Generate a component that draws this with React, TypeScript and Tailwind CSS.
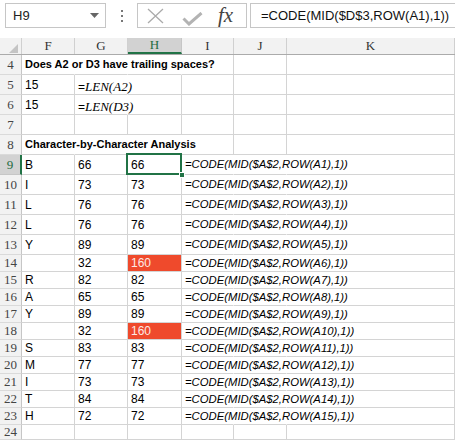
import React from "react";

type Cell = {
  t?: React.ReactNode;
  cls?: string;
  hideR?: boolean;
  red?: boolean;
  sel?: boolean;
};

const colW = ["w-[53px]", "w-[53px]", "w-[54px]", "w-[52px]", "w-[53px]"];

function Row({
  n,
  h,
  cells,
  selRow,
}: {
  n: number;
  h: string;
  cells: Cell[];
  selRow?: boolean;
}) {
  const all: Cell[] = [...cells];
  while (all.length < 6) all.push({});
  return (
    <div className={`flex ${h}`}>
      <div
        className={
          selRow
            ? "w-[22px] shrink-0 flex items-center justify-center bg-[#d2d2d2] border-b border-b-[#c6c6c6] border-r-2 border-r-[#217346] text-[#1e6b41] font-['Liberation_Serif',serif] text-[13px]"
            : "w-[22px] shrink-0 flex items-center justify-center bg-[#f2f2f2] border-b border-b-[#dadada] border-r border-r-[#c6c6c6] text-[#444] font-['Liberation_Serif',serif] text-[13px]"
        }
      >
        {n}
      </div>
      {all.map((c, i) => {
        const w = i < 5 ? colW[i] : "flex-1";
        const base = `${w} shrink-0 relative flex items-center pl-[3px] whitespace-nowrap border-b border-b-[#d4d4d4] border-r`;
        const rc = c.hideR ? "border-r-transparent" : "border-r-[#d4d4d4]";
        const bg = c.red ? "bg-[#ef4a2c] text-[#fde9e5]" : "text-black";
        return (
          <div key={i} className={`${base} ${rc} ${bg}`}>
            <span className={c.cls ?? "font-['Liberation_Sans',sans-serif] text-[12px]"}>{c.t}</span>
            {c.sel && (
              <>
                <div className="absolute z-10 -top-[2px] -left-[2px] -right-[1px] -bottom-[1px] border-2 border-[#217346]" />
                <div className="absolute z-20 -right-[4px] -bottom-[4px] w-[6px] h-[6px] bg-[#217346] border border-white" />
              </>
            )}
          </div>
        );
      })}
    </div>
  );
}

const formulaCls = "font-['Liberation_Sans',sans-serif] italic text-[11.3px]";
const boldCls = "font-['Liberation_Sans',sans-serif] font-bold text-[11px]";

const data: [string, string, string, boolean][] = [
  ["B", "66", "66", false],
  ["I", "73", "73", false],
  ["L", "76", "76", false],
  ["L", "76", "76", false],
  ["Y", "89", "89", false],
  ["", "32", "160", true],
  ["R", "82", "82", false],
  ["A", "65", "65", false],
  ["Y", "89", "89", false],
  ["", "32", "160", true],
  ["S", "83", "83", false],
  ["M", "77", "77", false],
  ["I", "73", "73", false],
  ["T", "84", "84", false],
  ["H", "72", "72", false],
];

function LenFormula({ arg }: { arg: string }) {
  return (
    <span className="font-['Liberation_Sans',sans-serif] text-[12px]">
      =<span className="font-['Liberation_Serif',serif] italic text-[13px]">LEN({arg})</span>
    </span>
  );
}

export default function App() {
  const headers = ["F", "G", "H", "I", "J", "K"];
  return (
    <div className="w-[455px] h-[440px] overflow-hidden bg-white select-none">
      {/* Formula bar */}
      <div className="h-[38px] flex items-start pt-[3px] pl-[5px] bg-white">
        <div className="w-[101px] h-[25px] shrink-0 border border-[#c6c6c6] bg-white flex items-center justify-between pl-[7px] pr-[6px]">
          <span className="font-['Liberation_Sans',sans-serif] text-[13px] text-[#222]">H9</span>
          <svg width="9" height="5" viewBox="0 0 9 5">
            <path d="M0 0 H9 L4.5 5 Z" fill="#666" />
          </svg>
        </div>
        <div className="w-[31px] h-[25px] shrink-0 flex flex-col items-center justify-center gap-[3px]">
          <div className="w-[2px] h-[2px] bg-[#777]" />
          <div className="w-[2px] h-[2px] bg-[#777]" />
          <div className="w-[2px] h-[2px] bg-[#777]" />
        </div>
        <div className="w-[110px] h-[25px] shrink-0 border border-[#c6c6c6] bg-white flex items-center pl-[9px]">
          <svg width="17" height="16" viewBox="0 0 17 16">
            <path d="M1 1 L16 15 M16 1 L1 15" stroke="#ababab" strokeWidth="1.3" fill="none" />
          </svg>
          <svg width="21" height="14" viewBox="0 0 21 14" className="ml-[18px] mt-[6px]">
            <path d="M1.5 6.5 L7 12 L19.5 1" stroke="#b3b3b3" strokeWidth="3" fill="none" />
          </svg>
          <span className="ml-[15px] font-['Liberation_Serif',serif] italic text-[21px] leading-none text-[#444] -mt-[1px]">
            fx
          </span>
        </div>
        <div className="ml-[3px] flex-1 h-[25px] border border-[#c6c6c6] border-r-0 bg-white flex items-center pl-[10px]">
          <span className="font-['Liberation_Sans',sans-serif] text-[13px] text-[#111] whitespace-nowrap">
            =CODE(MID($D$3,ROW(A1),1))
          </span>
        </div>
      </div>

      {/* Column headers */}
      <div className="flex h-[17px] bg-[#f2f2f2] border-b border-b-[#ababab]">
        <div className="w-[22px] shrink-0 relative border-r border-r-[#d0d0d0]">
          <svg width="9" height="9" viewBox="0 0 9 9" className="absolute right-[3px] bottom-[1px]">
            <path d="M9 0 V9 H0 Z" fill="#c4c4c4" />
          </svg>
        </div>
        {headers.map((hd, i) => {
          const w = i < 5 ? colW[i] : "flex-1";
          const selected = hd === "H";
          return (
            <div
              key={hd}
              className={
                selected
                  ? `${w} shrink-0 flex items-center justify-center bg-[#d2d2d2] border-b-2 border-b-[#217346] border-r border-r-[#c6c6c6] text-[#1e6b41] font-['Liberation_Serif',serif] text-[13px]`
                  : `${w} shrink-0 flex items-center justify-center border-r border-r-[#d0d0d0] text-[#333] font-['Liberation_Serif',serif] text-[13px]`
              }
            >
              {hd}
            </div>
          );
        })}
      </div>

      <Row
        n={4}
        h="h-[20px]"
        cells={[
          { t: "Does A2 or D3 have trailing spaces?", cls: boldCls, hideR: true },
          { hideR: true },
          { hideR: true },
        ]}
      />
      <Row n={5} h="h-[20px]" cells={[{ t: "15" }, { t: <LenFormula arg="A2" />, cls: "", hideR: true }]} />
      <Row n={6} h="h-[20px]" cells={[{ t: "15" }, { t: <LenFormula arg="D3" />, cls: "", hideR: true }]} />
      <Row n={7} h="h-[20px]" cells={[]} />
      <Row
        n={8}
        h="h-[20px]"
        cells={[
          { t: "Character-by-Character Analysis", cls: boldCls, hideR: true },
          { hideR: true },
          { hideR: true },
        ]}
      />
      {data.map(([f, g, hv, red], i) => {
        const n = 9 + i;
        return (
          <Row
            key={n}
            n={n}
            selRow={n === 9}
            h={n <= 13 ? "h-[20px]" : "h-[17px]"}
            cells={[
              { t: f },
              { t: g },
              { t: hv, red, sel: n === 9 },
              { t: `=CODE(MID($A$2,ROW(A${i + 1}),1))`, cls: formulaCls, hideR: true },
              { hideR: true },
            ]}
          />
        );
      })}
      <Row n={24} h="h-[15px]" cells={[]} />
    </div>
  );
}
